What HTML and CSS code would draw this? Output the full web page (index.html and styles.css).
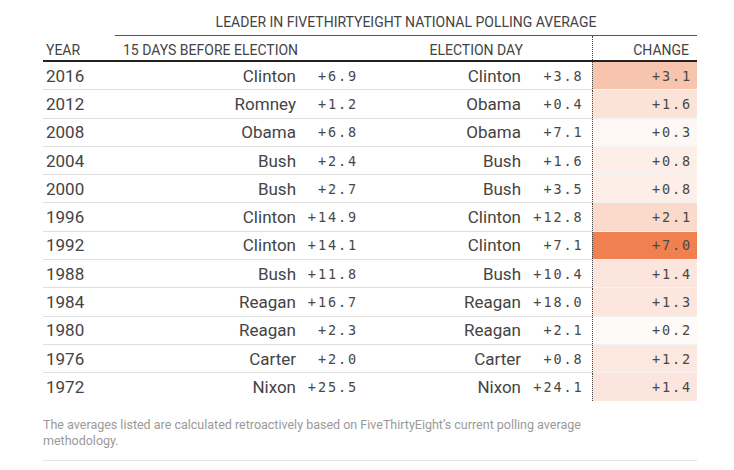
FILE: index.html
```
<!DOCTYPE html>
<html lang="en">
<head>
<meta charset="utf-8">
<title>Leader in FiveThirtyEight national polling average</title>
<link rel="stylesheet" href="styles.css">
</head>
<body>
<div class="wrap">
  <table class="polls">
    <colgroup>
      <col class="c-year"><col class="c-cand1"><col class="c-num1"><col class="c-cand2"><col class="c-num2"><col class="c-change">
    </colgroup>
    <thead>
      <tr class="group-row">
        <th></th>
        <th colspan="5" class="group">LEADER IN FIVETHIRTYEIGHT NATIONAL POLLING AVERAGE</th>
      </tr>
      <tr class="head-row">
        <th class="h-year">YEAR</th>
        <th colspan="2" class="h-left">15 DAYS BEFORE ELECTION</th>
        <th class="h-right">ELECTION DAY</th>
        <th class="h-empty"></th>
        <th class="h-change">CHANGE</th>
      </tr>
    </thead>
    <tbody>
      <tr><td class="year">2016</td><td class="cand">Clinton</td><td class="num n1">+6.9</td><td class="cand">Clinton</td><td class="num n2">+3.8</td><td class="chg" style="background:#f7c5ae">+3.1</td></tr>
      <tr><td class="year">2012</td><td class="cand">Romney</td><td class="num n1">+1.2</td><td class="cand">Obama</td><td class="num n2">+0.4</td><td class="chg" style="background:#fce3d8">+1.6</td></tr>
      <tr><td class="year">2008</td><td class="cand">Obama</td><td class="num n1">+6.8</td><td class="cand">Obama</td><td class="num n2">+7.1</td><td class="chg" style="background:#fef8f5">+0.3</td></tr>
      <tr><td class="year">2004</td><td class="cand">Bush</td><td class="num n1">+2.4</td><td class="cand">Bush</td><td class="num n2">+1.6</td><td class="chg" style="background:#fdeee7">+0.8</td></tr>
      <tr><td class="year">2000</td><td class="cand">Bush</td><td class="num n1">+2.7</td><td class="cand">Bush</td><td class="num n2">+3.5</td><td class="chg" style="background:#fdeee7">+0.8</td></tr>
      <tr><td class="year">1996</td><td class="cand">Clinton</td><td class="num n1">+14.9</td><td class="cand">Clinton</td><td class="num n2">+12.8</td><td class="chg" style="background:#fbdacb">+2.1</td></tr>
      <tr><td class="year">1992</td><td class="cand">Clinton</td><td class="num n1">+14.1</td><td class="cand">Clinton</td><td class="num n2">+7.1</td><td class="chg" style="background:#f0804f">+7.0</td></tr>
      <tr><td class="year">1988</td><td class="cand">Bush</td><td class="num n1">+11.8</td><td class="cand">Bush</td><td class="num n2">+10.4</td><td class="chg" style="background:#fce5dc">+1.4</td></tr>
      <tr><td class="year">1984</td><td class="cand">Reagan</td><td class="num n1">+16.7</td><td class="cand">Reagan</td><td class="num n2">+18.0</td><td class="chg" style="background:#fce6dd">+1.3</td></tr>
      <tr><td class="year">1980</td><td class="cand">Reagan</td><td class="num n1">+2.3</td><td class="cand">Reagan</td><td class="num n2">+2.1</td><td class="chg" style="background:#fefaf8">+0.2</td></tr>
      <tr><td class="year">1976</td><td class="cand">Carter</td><td class="num n1">+2.0</td><td class="cand">Carter</td><td class="num n2">+0.8</td><td class="chg" style="background:#fde8e0">+1.2</td></tr>
      <tr class="last"><td class="year">1972</td><td class="cand">Nixon</td><td class="num n1">+25.5</td><td class="cand">Nixon</td><td class="num n2">+24.1</td><td class="chg" style="background:#fce5dc">+1.4</td></tr>
    </tbody>
  </table>
  <div class="note">
    <p>The averages listed are calculated retroactively based on FiveThirtyEight’s current polling average methodology.</p>
  </div>
</div>
</body>
</html>
```
FILE: styles.css
```
html, body {
  margin: 0;
  padding: 0;
  background: #ffffff;
}
body {
  font-family: Roboto, "Liberation Sans", sans-serif;
  color: #444444;
}
.wrap {
  width: 654px;
  padding: 8px 0 0 43px;
}
.polls {
  width: 654px;
  border-collapse: collapse;
  table-layout: fixed;
}
.c-year { width: 72px; }
.c-cand1 { width: 185px; }
.c-num1 { width: 62px; }
.c-cand2 { width: 163px; }
.c-num2 { width: 67px; }
.c-change { width: 105px; }

.polls th {
  font-weight: 400;
  font-size: 14px;
  line-height: 16px;
  color: #444444;
  padding: 0;
}
.group-row th {
  padding: 6px 0 5px;
  vertical-align: bottom;
}
.group {
  text-align: center;
  border-bottom: 1px solid #555555;
}
.head-row th {
  padding-top: 6px;
  padding-bottom: 2px;
  border-bottom: 2px solid #222222;
  vertical-align: bottom;
}
.h-year { text-align: left; padding-left: 3px !important; }
.h-left { text-align: left; padding-left: 8px !important; }
.h-right { text-align: right; padding-right: 2px !important; }
.h-change {
  text-align: right;
  padding-right: 8px !important;
  border-left: 1px dotted #444444;
}
.polls td {
  height: 27.3px;
  padding: 0;
  border-bottom: 1px solid #dedede;
  font-size: 17px;
  line-height: 20px;
  vertical-align: middle;
  white-space: nowrap;
}
.polls tr.last td { border-bottom: none; }
.polls td.year { padding-left: 3px; }
.polls td.cand { text-align: right; padding-right: 4px; }
.polls td.num,
.polls td.chg {
  text-align: right;
  font-family: "DejaVu Sans Mono", "Liberation Mono", monospace;
  font-size: 13.5px;
  letter-spacing: 1.9px;
  color: #484848;
}
.polls td.n1 { padding-right: 4px; }
.polls td.n2 { padding-right: 8px; }
.polls td.chg {
  padding-right: 5px;
  border-left: 1px dotted #444444;
  border-bottom-color: #f3f3f3;
}
.note {
  margin-top: 16px;
  border-bottom: 1px solid #e4e4e4;
  padding-bottom: 11px;
}
.note p {
  margin: 0;
  max-width: 610px;
  font-size: 12.5px;
  line-height: 16px;
  color: #9a9a9a;
}
```
